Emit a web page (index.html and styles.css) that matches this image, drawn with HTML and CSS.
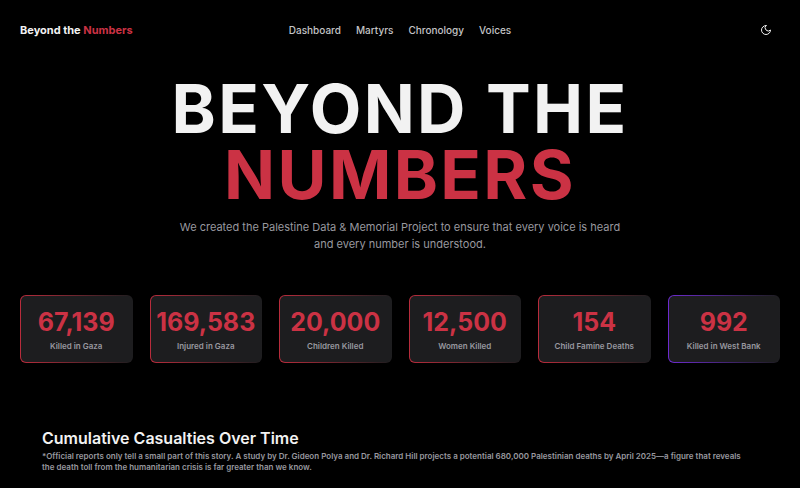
FILE: index.html
```html
<!DOCTYPE html>
<html lang="en">
<head>
<meta charset="utf-8">
<meta name="viewport" content="width=device-width, initial-scale=1">
<title>Beyond the Numbers</title>
<link rel="stylesheet" href="styles.css">
</head>
<body>
<header class="topbar">
  <a class="brand" href="#">Beyond the <span class="accent">Numbers</span></a>
  <nav class="nav" aria-label="Main">
    <a href="#dashboard">Dashboard</a>
    <a href="#martyrs">Martyrs</a>
    <a href="#chronology">Chronology</a>
    <a href="#voices">Voices</a>
  </nav>
  <div class="actions">
    <button class="theme" type="button" aria-label="Toggle theme">
      <svg viewBox="0 0 24 24" aria-hidden="true"><path d="M12 3a6 6 0 0 0 9 9 9 9 0 1 1-9-9Z"/></svg>
    </button>
  </div>
</header>
<main>
  <section class="hero">
    <h1>BEYOND THE<br><span class="accent">NUMBERS</span></h1>
    <p>We created the Palestine Data &amp; Memorial Project to ensure that every voice is heard and every number is understood.</p>
  </section>
  <section class="stats" aria-label="Key figures">
    <article class="card"><strong>67,139</strong><span>Killed in Gaza</span></article>
    <article class="card"><strong>169,583</strong><span>Injured in Gaza</span></article>
    <article class="card"><strong>20,000</strong><span>Children Killed</span></article>
    <article class="card"><strong>12,500</strong><span>Women Killed</span></article>
    <article class="card"><strong>154</strong><span>Child Famine Deaths</span></article>
    <article class="card card-violet"><strong>992</strong><span>Killed in West Bank</span></article>
  </section>
  <section class="chart" id="dashboard">
    <h2>Cumulative Casualties Over Time</h2>
    <p>*Official reports only tell a small part of this story. A study by Dr. Gideon Polya and Dr. Richard Hill projects a potential 680,000 Palestinian deaths by April 2025—a figure that reveals the death toll from the humanitarian crisis is far greater than we know.</p>
  </section>
</main>
</body>
</html>
```
FILE: styles.css
```css
* { box-sizing: border-box; }
body {
  margin: 0;
  background: #000;
  color: #f2f2f2;
  font-family: Inter, "Liberation Sans", sans-serif;
}
h1, h2, p { margin: 0; }
a { color: inherit; text-decoration: none; }
.accent { color: #cb3244; }

.topbar {
  display: grid;
  grid-template-columns: 1fr auto 1fr;
  align-items: center;
  height: 59px;
  padding: 0 20px;
}
.brand { font-size: 11px; font-weight: 700; }
.nav {
  display: flex;
  gap: 15px;
  color: #c4c4c6;
  font-size: 10px;
  font-weight: 500;
}
.actions { display: flex; justify-content: flex-end; }
.theme {
  display: flex;
  padding: 8px;
  border: 0;
  background: none;
  color: #f2f2f2;
}
.theme svg {
  width: 12px;
  height: 12px;
  fill: none;
  stroke: currentColor;
  stroke-width: 2;
  stroke-linecap: round;
  stroke-linejoin: round;
}

.hero { padding: 17px 20px 0; text-align: center; }
.hero h1 {
  font-size: 67px;
  line-height: 66px;
  font-weight: 700;
  letter-spacing: 0.035em;
}
.hero p {
  max-width: 460px;
  margin: 11px auto 0;
  color: #98989f;
  font-size: 11px;
  line-height: 17px;
}

.stats {
  display: grid;
  grid-template-columns: repeat(6, 1fr);
  gap: 17px;
  padding: 0 20px;
  margin-top: 42px;
}
.card {
  display: flex;
  flex-direction: column;
  align-items: center;
  gap: 3px;
  padding: 11px 0 10px;
  border: 1px solid transparent;
  border-radius: 6px;
  background:
    linear-gradient(#1d1d1f, #1d1d1f) padding-box,
    linear-gradient(90deg, #b92c3c, #1d1d1f) border-box,
    #000;
}
.card-violet {
  background:
    linear-gradient(#1d1d1f, #1d1d1f) padding-box,
    linear-gradient(90deg, #6d2bd0, #1d1d1f) border-box,
    #000;
}
.card strong {
  color: #cb3244;
  font-size: 25px;
  line-height: 30px;
  font-weight: 700;
}
.card span {
  color: #98989f;
  font-size: 8px;
  line-height: 12px;
  font-weight: 600;
}

.chart { margin-top: 64px; padding: 0 42px 14px; }
.chart h2 {
  font-size: 16px;
  line-height: 22px;
  font-weight: 600;
}
.chart p {
  padding-right: 9px;
  margin-top: 2px;
  color: #98989f;
  font-size: 8px;
  line-height: 11px;
  font-weight: 600;
}
```
